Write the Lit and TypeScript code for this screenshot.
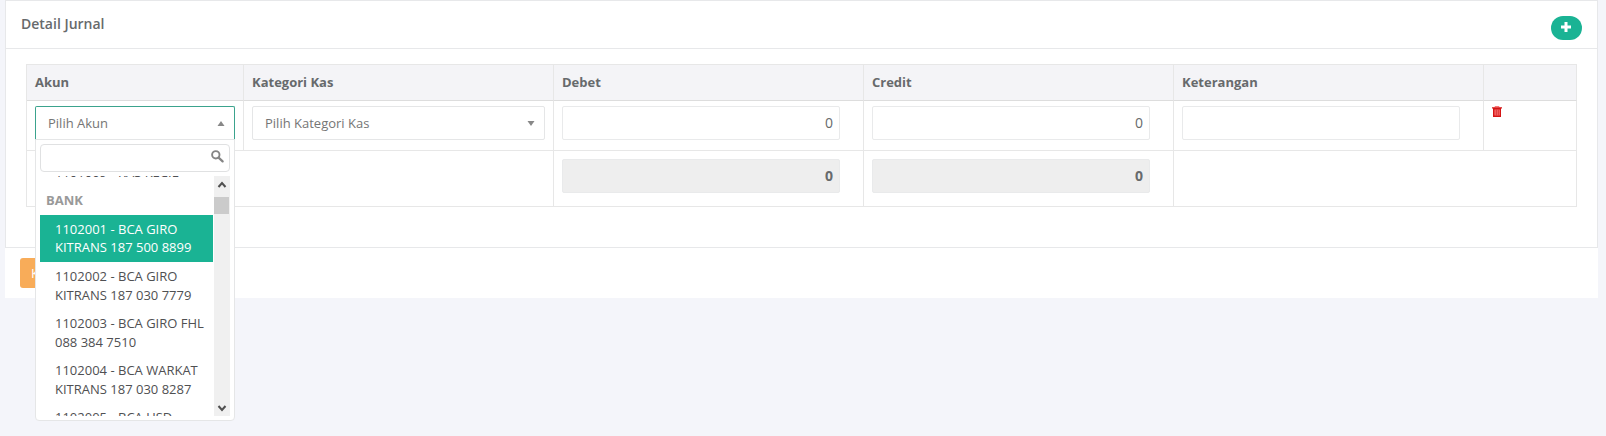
import { LitElement, html, css, svg } from "lit";
import { customElement, property, state } from "lit/decorators.js";

interface Account {
  code: string;
  name: string;
}

const BANK_ACCOUNTS: Account[] = [
  { code: "1102001", name: "BCA GIRO KITRANS 187 500 8899" },
  { code: "1102002", name: "BCA GIRO KITRANS 187 030 7779" },
  { code: "1102003", name: "BCA GIRO FHL 088 384 7510" },
  { code: "1102004", name: "BCA WARKAT KITRANS 187 030 8287" },
  { code: "1102005", name: "BCA USD" },
];

const chevron = (d: string) => svg`<path d=${d} fill="none" stroke="#505050" stroke-width="2"/>`;

@customElement("account-dropdown")
class AccountDropdown extends LitElement {
  @state() highlighted = "1102001";

  static styles = css`
    :host {
      display: block;
      box-sizing: border-box;
      width: 200px;
      height: 282px;
      padding: 4px;
      background: #fff;
      border: 1px solid #e5e6e7;
      border-radius: 0 0 4px 4px;
      color: #4f5052;
    }
    .search {
      display: flex;
      justify-content: flex-end;
      box-sizing: border-box;
      height: 28px;
      padding: 5px 5px 0 0;
      border: 1px solid #e0e1e2;
      border-radius: 4px;
    }
    .results {
      display: flex;
      height: 240px;
      margin-top: 4px;
    }
    .list {
      width: 174px;
      height: 240px;
      overflow: hidden;
    }
    .option {
      box-sizing: border-box;
      height: 47px;
      margin-right: 1px;
      padding: 5px 5px 4px 15px;
      line-height: 19px;
    }
    .option.first {
      height: 28px;
      margin-top: -18px;
      white-space: nowrap;
    }
    .option.active {
      line-height: 18px;
      background: #1ab394;
      color: #fff;
    }
    .group {
      box-sizing: border-box;
      height: 29px;
      padding: 5px 6px;
      line-height: 18.57px;
      font-weight: 700;
      color: #999;
    }
    .scrollbar {
      display: flex;
      flex-direction: column;
      width: 16px;
      height: 240px;
      background: #f0f0f0;
    }
    .thumb {
      width: 15px;
      height: 17px;
      margin: 4px 0 auto;
      background: #cbcbcb;
    }
    svg {
      display: block;
    }
  `;

  render() {
    return html`
      <div class="search">
        <svg width="13" height="13" viewBox="0 0 13 13">
          <circle cx="4.8" cy="4.8" r="3.7" fill="none" stroke="#858585" stroke-width="1.9" />
          <path d="M7.6 7.6 L11.6 11.4" stroke="#858585" stroke-width="2.2" stroke-linecap="round" />
        </svg>
      </div>
      <div class="results">
        <div class="list">
          <div class="option first">1101009 - KAS KECIL</div>
          <div class="group">BANK</div>
          ${BANK_ACCOUNTS.map(
            (a) => html`<div class="option ${a.code === this.highlighted ? "active" : ""}">
              ${a.code} - ${a.name}
            </div>`
          )}
        </div>
        <div class="scrollbar">
          <svg width="16" height="17">${chevron("M4.5 11 L8 7 L11.5 11")}</svg>
          <div class="thumb"></div>
          <svg width="16" height="17">${chevron("M4.5 7 L8 11 L11.5 7")}</svg>
        </div>
      </div>
    `;
  }
}

@customElement("select-box")
class SelectBox extends LitElement {
  @property() label = "";
  @property({ type: Boolean, reflect: true }) open = false;

  static styles = css`
    :host {
      display: block;
      position: relative;
    }
    .box {
      display: flex;
      align-items: center;
      justify-content: space-between;
      box-sizing: border-box;
      height: 34px;
      padding: 0 9px 0 12px;
      border: 1px solid #e5e6e7;
      border-radius: 2px;
      color: #757575;
    }
    :host([open]) .box {
      border-color: #3ba38d;
      border-bottom-color: #e5e6e7;
      border-radius: 2px 2px 0 0;
    }
    .menu {
      position: absolute;
      z-index: 5;
      top: 33px;
      left: 0;
    }
    svg {
      display: block;
    }
  `;

  render() {
    return html`
      <div class="box">
        <span>${this.label}</span>
        <svg width="8" height="5" viewBox="0 0 8 5">
          <path d=${this.open ? "M0.5 5 L4 0 L7.5 5 Z" : "M0.5 0 L4 5 L7.5 0 Z"} fill="#888" />
        </svg>
      </div>
      ${this.open ? html`<account-dropdown class="menu"></account-dropdown>` : ""}
    `;
  }
}

@customElement("app-root")
class AppRoot extends LitElement {
  static styles = css`
    :host {
      display: block;
      box-sizing: border-box;
      height: 436px;
      padding: 0 8px 0 5px;
      overflow: hidden;
      background: #f4f5fa;
      color: #676a6c;
      font: 13px/18.57px "Open Sans", sans-serif;
    }
    .panel {
      box-sizing: border-box;
      height: 248px;
      border: 1px solid #e7e8ea;
      background: #fff;
    }
    .head {
      display: flex;
      justify-content: space-between;
      box-sizing: border-box;
      height: 48px;
      padding: 15px 15px 0;
      border-bottom: 1px solid #e7e8ea;
    }
    .title {
      margin: -1px 0 0;
      font-size: 14px;
      line-height: 18px;
      font-weight: 600;
    }
    .add {
      display: flex;
      align-items: center;
      justify-content: center;
      width: 31px;
      height: 24px;
      padding: 0 1px 2px 0;
      border: 0;
      border-radius: 12px;
      background: #1ab394;
    }
    .table {
      display: grid;
      grid-template-columns: 217px 310px 310px 310px 310px 93px;
      grid-template-rows: 36px 50px 56px;
      width: 1550px;
      margin: 15px 0 0 20px;
      border-top: 1px solid #e7e7e7;
      border-left: 1px solid #e7e7e7;
    }
    .table > div {
      box-sizing: border-box;
      border-right: 1px solid #e7e7e7;
      border-bottom: 1px solid #e7e7e7;
      padding: 5px 8px;
    }
    .table > .th {
      padding-top: 8px;
      background: #f4f4f7;
      border-bottom-color: #ddd;
      font-weight: 700;
    }
    .table > .total {
      padding-top: 8px;
    }
    .span2 {
      grid-column: span 2;
    }
    .field {
      box-sizing: border-box;
      width: 278px;
      height: 34px;
      padding: 6px;
      border: 1px solid #e9eaeb;
      border-radius: 2px;
      font-size: 14px;
      line-height: 20px;
      text-align: right;
    }
    .sum {
      background: #eee;
      font-weight: 700;
    }
    .foot {
      display: flex;
      box-sizing: border-box;
      height: 50px;
      padding: 10px 15px;
      background: #fff;
    }
    .back {
      height: 30px;
      padding: 0 11px;
      border: 0;
      border-radius: 3px;
      background: #f8ac59;
      color: #fff;
      font: inherit;
    }
    svg {
      display: block;
    }
  `;

  render() {
    return html`
      <section class="panel">
        <header class="head">
          <h5 class="title">Detail Jurnal</h5>
          <button class="add" aria-label="Tambah">
            <svg width="10" height="10"><path d="M3.5 0h3v3.5H10v3H6.5V10h-3V6.5H0v-3h3.5z" fill="#fff" /></svg>
          </button>
        </header>
        <div class="table">
          ${["Akun", "Kategori Kas", "Debet", "Credit", "Keterangan", ""].map(
            (t) => html`<div class="th">${t}</div>`
          )}
          <div><select-box label="Pilih Akun" open></select-box></div>
          <div><select-box label="Pilih Kategori Kas"></select-box></div>
          <div><div class="field">0</div></div>
          <div><div class="field">0</div></div>
          <div><div class="field"></div></div>
          <div>
            <svg width="10" height="11" viewBox="0 0 10 11">
              <path d="M3 1.5V.5h4v1" fill="none" stroke="#f77" />
              <path d="M0 1.2h10v1.3H9V11H1V2.500H0z" fill="#d41414" />
              <path d="M2.500 3.500h5.200v6H2.500z" fill="#f77" />
              <path d="M4.200 3.500v6M6.200 3.500v6" stroke="#c81414" stroke-width=".8" />
            </svg>
          </div>
          <div class="span2"></div>
          <div class="total"><div class="field sum">0</div></div>
          <div class="total"><div class="field sum">0</div></div>
          <div class="span2"></div>
        </div>
      </section>
      <footer class="foot"><button class="back">Kembali</button></footer>
    `;
  }
}
